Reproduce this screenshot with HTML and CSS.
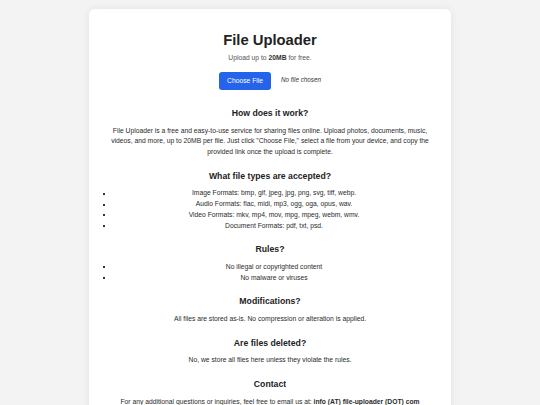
FILE: index.html
```html
<!DOCTYPE html>
<html lang="en">
<head>
<meta charset="utf-8">
<title>File Uploader</title>
<link rel="stylesheet" href="styles.css">
</head>
<body>
<main class="card">
  <h1 class="title">File Uploader</h1>
  <p class="subtitle">Upload up to <strong>20MB</strong> for free.</p>
  <div class="upload">
    <button class="choose" type="button">Choose File</button>
    <span class="nofile">No file chosen</span>
  </div>

  <section class="section">
    <h2>How does it work?</h2>
    <p>File Uploader is a free and easy-to-use service for sharing files online. Upload photos, documents, music, videos, and more, up to 20MB per file. Just click "Choose File," select a file from your device, and copy the provided link once the upload is complete.</p>
  </section>

  <section class="section">
    <h2>What file types are accepted?</h2>
    <ul class="list">
      <li>Image Formats: bmp, gif, jpeg, jpg, png, svg, tiff, webp.</li>
      <li>Audio Formats: flac, midi, mp3, ogg, oga, opus, wav.</li>
      <li>Video Formats: mkv, mp4, mov, mpg, mpeg, webm, wmv.</li>
      <li>Document Formats: pdf, txt, psd.</li>
    </ul>
  </section>

  <section class="section">
    <h2>Rules?</h2>
    <ul class="list">
      <li>No illegal or copyrighted content</li>
      <li>No malware or viruses</li>
    </ul>
  </section>

  <section class="section">
    <h2>Modifications?</h2>
    <p>All files are stored as-is. No compression or alteration is applied.</p>
  </section>

  <section class="section">
    <h2>Are files deleted?</h2>
    <p>No, we store all files here unless they violate the rules.</p>
  </section>

  <section class="section">
    <h2>Contact</h2>
    <p>For any additional questions or inquiries, feel free to email us at: <strong>info (AT) file-uploader (DOT) com</strong></p>
  </section>
</main>
</body>
</html>
```

FILE: styles.css
```css
html, body {
  margin: 0;
  padding: 0;
}
body {
  background: #f3f3f3;
  font-family: "Liberation Sans", Arial, sans-serif;
  font-size: 6.75px;
  line-height: 10.7px;
  color: #2b2b2b;
}
.card {
  width: 362px;
  box-sizing: border-box;
  margin: 9px auto 0;
  padding: 22px 20px 40px;
  background: #fff;
  border-radius: 6px;
  box-shadow: 0 0 8px rgba(0, 0, 0, 0.07);
  text-align: center;
}
.title {
  margin: 0;
  font-size: 14.8px;
  line-height: 18px;
  font-weight: bold;
  color: #222;
}
.subtitle {
  margin: 4px 0 0;
  color: #555;
}
.subtitle strong {
  color: #333;
}
.upload {
  display: flex;
  justify-content: center;
  align-items: center;
  gap: 10px;
  margin-top: 8px;
}
.choose {
  font-family: inherit;
  font-size: 6.75px;
  line-height: 8px;
  height: 18px;
  padding: 0 8px;
  border: none;
  border-radius: 3px;
  background: #2563eb;
  color: #fff;
  cursor: pointer;
}
.nofile {
  font-style: italic;
  font-size: 6.3px;
  color: #333;
}
.section {
  margin-top: 18px;
}
.section + .section {
  margin-top: 12.8px;
}
h2 {
  margin: 0 0 7.5px;
  font-size: 8.7px;
  line-height: 10.4px;
  font-weight: bold;
  color: #222;
}
p {
  margin: 0;
}
.list {
  margin: 0;
  padding: 0 0 0 8px;
  list-style: none;
}
.list li {
  position: relative;
}
.list li::before {
  content: "";
  position: absolute;
  left: -14px;
  top: 4.5px;
  width: 2px;
  height: 2px;
  background: #333;
}
```
